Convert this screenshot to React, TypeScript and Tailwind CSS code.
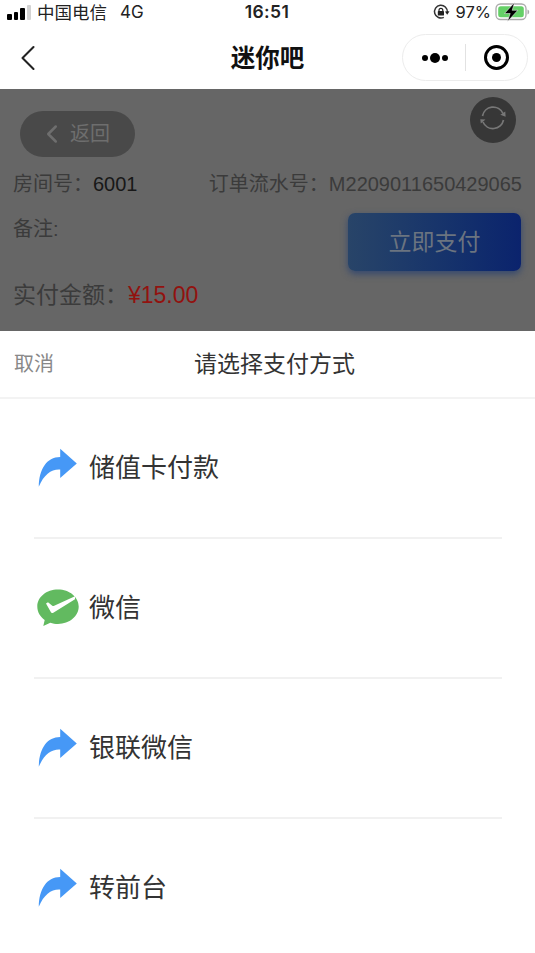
import { ChevronLeft } from "lucide-react";

const methods = [
  { name: "储值卡付款", icon: "arrow" },
  { name: "微信", icon: "wechat" },
  { name: "银联微信", icon: "arrow" },
  { name: "转前台", icon: "arrow" },
];

function ArrowIcon() {
  return (
    <svg width="42" height="42" viewBox="0 0 42 42" className="shrink-0">
      <path d="M23.2 1.800 39.800 16.500 23.200 31V22.600C14.500 22 7 27.500 1.800 39.800C2 22.500 9.500 10 23.200 10Z" fill="#4698f6" />
    </svg>
  );
}

function WechatIcon() {
  return (
    <svg width="42" height="42" viewBox="0 0 42 42" className="shrink-0">
      <path d="M21 2.500C9.500 2.500.3 10 .3 19.500c0 5.600 3 10.300 7.400 13.400L6.300 39l7-3.300c2.400.9 5 1.300 7.700 1.300 11.500 0 20.700-7.800 20.700-17.400S32.500 2.500 21 2.500Z" fill="#62ba60" />
      <path d="m9 16.500 2-1.300 4.300 3.500c.6.400 1.200.4 1.900.1L38 9.300v3L16.300 25.700c-1.200.6-2 .4-2.500-.7Z" fill="#fff" />
    </svg>
  );
}

function StatusBar() {
  return (
    <div className="flex h-6 shrink-0 items-center justify-between pl-[7px] pr-[5px] text-[#222]">
      <div className="flex w-[200px] items-center">
        <div className="flex h-[15px] items-end gap-[2px]">
          <span className="h-[6px] w-[4.500px] rounded-[1px] bg-black" />
          <span className="h-[8px] w-[4.500px] rounded-[1px] bg-black" />
          <span className="h-[12px] w-[4.500px] rounded-[1px] bg-black" />
          <span className="h-[15px] w-[4.500px] rounded-[1px] bg-[#d3d3d3]" />
        </div>
        <span className="ml-[6px] pt-px text-[17.500px] leading-6">中国电信</span>
        <span className="ml-[13px] font-['Inter'] text-[17px] leading-6">4G</span>
      </div>
      <span className="mr-[3px] font-['Inter'] text-[17.500px] leading-6 font-semibold tracking-[0.4px]">16:51</span>
      <div className="flex w-[200px] items-center justify-end">
        <svg width="17" height="16" viewBox="0 0 17 16" fill="none">
          <path d="M10.800 13.300A6.400 6.400 0 1 1 14.300 8" stroke="#333" strokeWidth="1.500" />
          <path d="m12 7.500 4.500-.2-2.300 3.500Z" fill="#222" />
          <rect x="4.800" y="7" width="6.200" height="4.600" rx="0.700" fill="#222" />
          <path d="M6 7.500V6.200a1.900 1.900 0 0 1 3.800 0v1.300" stroke="#222" strokeWidth="1.200" />
        </svg>
        <span className="ml-[6px] font-['Inter'] text-[16.500px] leading-6">97%</span>
        <svg width="35" height="22" viewBox="0 0 35 22" className="ml-[4px]">
          <rect x="1" y="3" width="30" height="15.500" rx="4.500" fill="#fff" stroke="#aaa" strokeWidth="1.300" />
          <rect x="3.200" y="5.200" width="25.600" height="11.100" rx="2.500" fill="#65d067" />
          <path d="M32.500 8.500v5c1.200-.5 1.700-1.400 1.700-2.500s-.5-2-1.700-2.500Z" fill="#aaa" />
          <path d="M19.500 1.500 9.500 12.500h5.700L12.500 20.500 22.800 9.300h-5.600Z" fill="#000" stroke="#fff" strokeWidth="0.500" />
        </svg>
      </div>
    </div>
  );
}

function NavBar() {
  return (
    <div className="flex h-[65px] shrink-0 items-start justify-between pl-[20px] pr-[7px] pt-[10px]">
      <div className="flex h-12 w-[125px] items-center">
        <svg width="16" height="26" viewBox="0 0 16 26" fill="none">
          <path d="M13.500 2 2.500 13l11 11" stroke="#222" strokeWidth="2.100" strokeLinecap="round" strokeLinejoin="round" />
        </svg>
      </div>
      <h1 className="ml-[-12px] pt-px text-[24.500px] leading-[47px] font-bold text-[#111]">迷你吧</h1>
      <div className="flex h-[47px] w-[126px] items-center rounded-full border border-[#ececec]">
        <div className="flex w-[62px] items-center justify-center gap-[2px] pl-[2px]">
          <span className="size-[6px] rounded-full bg-black" />
          <span className="size-[10px] rounded-full bg-black" />
          <span className="size-[6px] rounded-full bg-black" />
        </div>
        <div className="h-[27px] w-px bg-[#e2e2e2]" />
        <div className="flex flex-1 items-center justify-center pr-px">
          <div className="flex size-[25px] items-center justify-center rounded-full border-[3px] border-black">
            <span className="size-[9px] rounded-full bg-black" />
          </div>
        </div>
      </div>
    </div>
  );
}

function OrderInfo() {
  return (
    <div className="h-[242px] shrink-0 bg-[#666] px-[13px] pt-[7px] text-[#3b3b3b]">
      <div className="flex items-start justify-between pl-[7px] pr-[6px]">
        <button className="mt-[15px] flex h-[46px] w-[115px] items-center rounded-full bg-[#494949] pl-[17px] text-[#6e6e6e]">
          <ChevronLeft size={30} strokeWidth={2} />
          <span className="ml-[3px] text-[20px] leading-[46px]">返回</span>
        </button>
        <button className="mt-px flex size-[46px] items-center justify-center rounded-full bg-[#373737]">
          <svg width="28" height="28" viewBox="0 0 28 28" fill="none" className="mb-[5px]">
            <path d="M3.500 12A10.800 10.800 0 0 1 24 9.500M24.500 16A10.800 10.800 0 0 1 4 18" stroke="#777" strokeWidth="1.700" />
            <path d="m21.300 10.800 5-3.300.3 5.200ZM1.300 15.300l5.200.2-4.700 4Z" fill="#777" />
          </svg>
        </button>
      </div>
      <div className="mt-[12px] flex h-[30px] items-center justify-between text-[20px] whitespace-nowrap">
        <p>房间号：<span className="text-[#181818]">6001</span></p>
        <p>订单流水号：<span>M2209011650429065</span></p>
      </div>
      <div className="flex justify-between">
        <p className="mt-[15px] text-[20px] leading-[30px]">备注:</p>
        <button className="mr-[1px] mt-[14px] h-[58px] w-[173px] rounded-[7px] bg-linear-to-r from-[#284468] to-[#0b236d] text-[23px] leading-[58px] text-[#6b7480] shadow-[0_3px_7px_#34486f]">
          立即支付
        </button>
      </div>
      <p className="mt-[7px] text-[23px] leading-[34px]">
        实付金额：<span className="text-[#92120f]">¥15.00</span>
      </p>
    </div>
  );
}

export default function App() {
  return (
    <main className="flex h-[953px] w-[535px] flex-col overflow-hidden bg-white font-['Liberation_Sans','Noto_Sans_CJK_SC',sans-serif]">
      <StatusBar />
      <NavBar />
      <OrderInfo />

      <section className="flex-1 bg-white text-[#333]">
        <header className="grid h-[68px] grid-cols-[1fr_auto_1fr] items-center border-b-2 border-[#f3f3f3] pl-[14px]">
          <span className="text-[20px] text-[#888]">取消</span>
          <h2 className="text-[23px]">请选择支付方式</h2>
        </header>
        <ul className="pl-[34px] pr-[33px]">
          {methods.map((item) => (
            <li key={item.name} className="flex h-[140px] items-center border-b-2 border-[#f1f1f1] pl-[3px] text-[26px] last:border-transparent">
              {item.icon === "wechat" ? <WechatIcon /> : <ArrowIcon />}
              <span className="ml-[10px]">{item.name}</span>
            </li>
          ))}
        </ul>
      </section>
    </main>
  );
}
